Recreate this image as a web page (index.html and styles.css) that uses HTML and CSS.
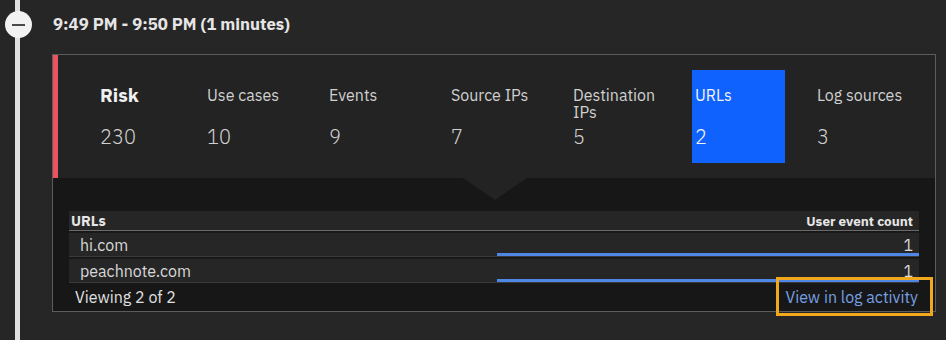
FILE: index.html
```html
<!DOCTYPE html>
<html>
<head>
<meta charset="utf-8">
<link rel="stylesheet" href="styles.css">
</head>
<body>
<div class="timeline">
  <div class="rail">
    <div class="toggle"><span class="minus"></span></div>
  </div>
  <div class="entry">
    <div class="time">9:49 PM - 9:50 PM (1 minutes)</div>
    <div class="card">
      <div class="summary">
        <div class="tile risk">
          <div class="label">Risk</div>
          <div class="value">230</div>
        </div>
        <div class="tile">
          <div class="label">Use cases</div>
          <div class="value">10</div>
        </div>
        <div class="tile">
          <div class="label">Events</div>
          <div class="value">9</div>
        </div>
        <div class="tile">
          <div class="label">Source IPs</div>
          <div class="value">7</div>
        </div>
        <div class="tile">
          <div class="label">Destination IPs</div>
          <div class="value">5</div>
        </div>
        <div class="tile selected">
          <div class="label">URLs</div>
          <div class="value">2</div>
        </div>
        <div class="tile">
          <div class="label">Log sources</div>
          <div class="value">3</div>
        </div>
      </div>
      <div class="details">
        <div class="table">
          <div class="thead">
            <div class="th">URLs</div>
            <div class="th right">User event count</div>
          </div>
          <div class="tr">
            <div class="td name">hi.com</div>
            <div class="td count"><span class="num">1</span><span class="bar" style="width:100%"></span></div>
          </div>
          <div class="tr">
            <div class="td name">peachnote.com</div>
            <div class="td count"><span class="num">1</span><span class="bar" style="width:100%"></span></div>
          </div>
        </div>
        <div class="footer">
          <span class="viewing">Viewing 2 of 2</span>
          <a class="link" href="#">View in log activity</a>
        </div>
      </div>
    </div>
  </div>
</div>
</body>
</html>
```
FILE: styles.css
```css
* { box-sizing: border-box; }
html, body { margin: 0; padding: 0; }
body {
  background: #262626;
  font-family: "IBM Plex Sans", "Noto Sans", "Open Sans", sans-serif;
  color: #c6c6c6;
  width: 946px;
  height: 340px;
  overflow: hidden;
}
.timeline {
  display: flex;
  height: 340px;
}
.rail {
  width: 52px;
  flex: none;
  position: relative;
}
.rail::before {
  content: "";
  position: absolute;
  left: 15px;
  top: 0;
  bottom: 0;
  width: 5px;
  background: #e0e0e0;
}
.toggle {
  position: relative;
  margin: 11px 0 0 5px;
  width: 27px;
  height: 27px;
  border-radius: 50%;
  background: #f2f2f2;
  display: flex;
  align-items: center;
  justify-content: center;
}
.minus {
  width: 13px;
  height: 2px;
  background: #4a4a4a;
}
.entry {
  flex: 1;
  padding-right: 10px;
}
.time {
  font-weight: 700;
  font-size: 16.8px;
  color: #e6e6e6;
  line-height: 20px;
  padding-top: 14px;
  margin-left: 1px;
  height: 54px;
}
.card {
  border: 1px solid #5c5c5c;
  width: 884px;
  position: relative;
}
.summary {
  display: flex;
  gap: 29px;
  background: #232323;
  border-left: 5px solid #ec535e;
  padding: 15px 0 15px 39px;
  height: 123px;
}
.tile {
  width: 93px;
  height: 93px;
  padding: 17px 3px 0 3px;
}
.tile.risk { width: 78px; }
.tile.selected { background: #0f62fe; color: #ffffff; }
.label {
  font-size: 16px;
  line-height: 17px;
  height: 34px;
  color: #d0d0d0;
}
.selected .label, .selected .value { color: #f4f4f4; }
.risk .label {
  font-size: 19px;
  font-weight: 700;
  color: #f0f0f0;
}
.value {
  margin-top: 4px;
  font-size: 20px;
  line-height: 24px;
  font-weight: 300;
  color: #d0d0d0;
}
.details {
  background: #171717;
  padding: 33px 16px 0 16px;
  position: relative;
}
.details::before {
  content: "";
  position: absolute;
  top: 0;
  left: 410px;
  border-left: 32px solid transparent;
  border-right: 32px solid transparent;
  border-top: 22px solid #232323;
}
.table {
  font-size: 16px;
}
.thead {
  display: flex;
  justify-content: space-between;
  background: #262626;
  border-bottom: 1px solid #6a6a6a;
  height: 20px;
  line-height: 20px;
  font-size: 13.5px;
  font-weight: 700;
  color: #e6e6e6;
}
.th { padding-left: 2px; }
.th:first-child { font-size: 14.5px; }
.th.right { padding-right: 6px; }
.tr {
  display: flex;
  height: 25px;
  background: #262626;
  border-top: 1px solid #1a1a1a;
  border-bottom: 1px solid #3a3a3a;
  margin-top: 1px;
}
.td { flex: 1; }
.name {
  padding-left: 11px;
  line-height: 24px;
  color: #d8d8d8;
}
.count {
  position: relative;
  text-align: right;
  padding-right: 6px;
}
.num {
  display: block;
  line-height: 24px;
  color: #d8d8d8;
}
.bar {
  position: absolute;
  right: 0;
  bottom: 0;
  height: 3px;
  background: #4f87e6;
}
.footer {
  display: flex;
  justify-content: space-between;
  align-items: center;
  height: 28px;
  padding: 0 1px 0 6px;
  font-size: 16px;
}
.viewing { color: #e0e0e0; }
.link {
  color: #76a0e2;
  text-decoration: none;
  position: relative;
}
.link::after {
  content: "";
  position: absolute;
  left: -9px;
  right: -15px;
  top: -10px;
  bottom: -9px;
  border: 3px solid #f2a81d;
}
```
